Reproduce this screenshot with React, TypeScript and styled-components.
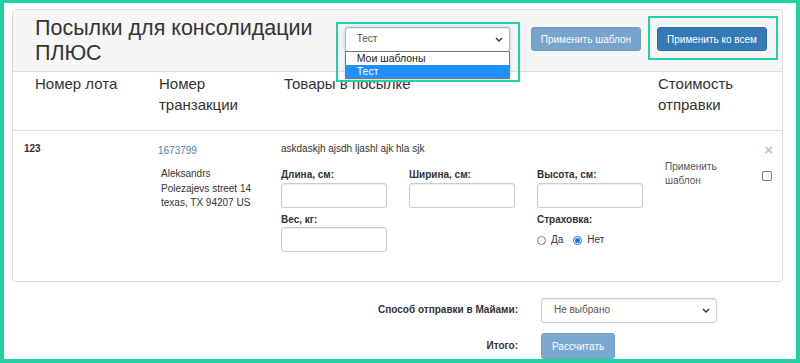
import React from "react";
import styled, { createGlobalStyle } from "styled-components";

const teal = "#1fd1a3";

const GlobalStyle = createGlobalStyle`
  html, body {
    margin: 0;
    padding: 0;
    background: #fff;
  }
  body {
    font-family: "Liberation Sans", Arial, sans-serif;
    font-size: 10px;
    line-height: 1.44;
    color: #333;
  }
  * {
    box-sizing: border-box;
  }
`;

const Chevron = () => (
  <svg width="8" height="5" viewBox="0 0 8 5">
    <polyline points="1,1 4,4 7,1" fill="none" stroke="#333" strokeWidth="1.4" />
  </svg>
);

const Root = () => {
  return (
    <Frame>
      <Panel>
        <PanelHeader>
          <Title>Посылки для консолидации ПЛЮС</Title>
          <Highlight $t={-5} $r={-10} $b={-30} $l={-9}>
            <SelectBox $focus $w={165}>
              <span>Тест</span>
              <Chevron />
            </SelectBox>
            <OptionList>
              <Option>Мои шаблоны</Option>
              <Option $active>Тест</Option>
            </OptionList>
          </Highlight>
          <Button $faded $ml={21}>
            Применить шаблон
          </Button>
          <Highlight $t={-11} $r={-11} $b={-9} $l={-9} $ml={16}>
            <Button>Применить ко всем</Button>
          </Highlight>
        </PanelHeader>

        <HeadRow>
          <div>Номер лота</div>
          <div>
            Номер
            <br />
            транзакции
          </div>
          <div>Товары в посылке</div>
          <div>Стоимость отправки</div>
        </HeadRow>

        <ItemRow>
          <LotNo>123</LotNo>
          <div>
            <TxLink href="#">1673799</TxLink>
            <Address>
              Aleksandrs
              <br />
              Polezajevs street 14
              <br />
              texas, TX 94207 US
            </Address>
          </div>
          <div>
            <div>askdaskjh ajsdh ljashl ajk hla sjk</div>
            <Fields>
              <Field>
                <Label>Длина, см:</Label>
                <Input />
              </Field>
              <Field>
                <Label>Ширина, см:</Label>
                <Input />
              </Field>
              <Field>
                <Label>Высота, см:</Label>
                <Input />
              </Field>
              <Field>
                <Label>Вес, кг:</Label>
                <Input />
              </Field>
              <span />
              <Field>
                <Label>Страховка:</Label>
                <RadioRow>
                  <Radio />
                  <RadioText>Да</RadioText>
                  <Radio $checked />
                  <RadioText>Нет</RadioText>
                </RadioRow>
              </Field>
            </Fields>
          </div>
          <ApplyCell>
            <Close>×</Close>
            <ApplyRow>
              <ApplyText>Применить шаблон</ApplyText>
              <Checkbox />
            </ApplyRow>
          </ApplyCell>
        </ItemRow>
      </Panel>

      <Summary>
        <SummaryLabel>Способ отправки в Майами:</SummaryLabel>
        <SelectBox $w={176} $pl={12}>
          <span>Не выбрано</span>
          <Chevron />
        </SelectBox>
        <SummaryLabel>Итого:</SummaryLabel>
        <Button $faded $h={26} $px={10}>
          Рассчитать
        </Button>
      </Summary>
    </Frame>
  );
};

export default function App() {
  return (
    <>
      <GlobalStyle />
      <Root />
    </>
  );
}

const Frame = styled.div`
  width: 800px;
  height: 363px;
  border: 4px solid ${teal};
  border-top-width: 3px;
  overflow: hidden;
  padding: 6px 13px 0 8px;
`;

const Panel = styled.div`
  border: 1px solid #ddd;
  border-radius: 3px;
  height: 273px;
  overflow: hidden;
`;

const PanelHeader = styled.div`
  display: flex;
  align-items: flex-start;
  height: 62px;
  padding: 6px 15px 0 22px;
  background: #f5f5f5;
  border-bottom: 1px solid #ddd;
`;

const Title = styled.h2`
  margin: 0;
  width: 312px;
  font-size: 21.5px;
  line-height: 25px;
  font-weight: 400;
  color: #333;
`;

const Highlight = styled.div<{ $t: number; $r: number; $b: number; $l: number; $ml?: number }>`
  position: relative;
  margin-top: 11px;
  margin-left: ${(p) => p.$ml || 0}px;
  z-index: 2;

  &::after {
    content: "";
    position: absolute;
    top: ${(p) => p.$t}px;
    right: ${(p) => p.$r}px;
    bottom: ${(p) => p.$b}px;
    left: ${(p) => p.$l}px;
    border: 2px solid ${teal};
    pointer-events: none;
  }
`;

const SelectBox = styled.div<{ $focus?: boolean; $w: number; $pl?: number }>`
  display: flex;
  align-items: center;
  justify-content: space-between;
  width: ${(p) => p.$w}px;
  height: 25px;
  padding: 0 6px 0 ${(p) => p.$pl || 11}px;
  background: #fff;
  border: 1px solid ${(p) => (p.$focus ? "#8dbde8" : "#ccc")};
  border-radius: 3px;
  color: #555;
  font-size: 10px;
  box-shadow: ${(p) =>
    p.$focus
      ? "inset 0 1px 1px rgba(0,0,0,.075), 0 0 4px rgba(102,175,233,.5)"
      : "inset 0 1px 1px rgba(0,0,0,.075)"};
`;

const OptionList = styled.div`
  position: absolute;
  top: 24px;
  left: 0;
  width: 165px;
  background: #fff;
  border: 1px solid #7a7a7a;
  box-shadow: 0 2px 3px rgba(0, 0, 0, 0.15);
`;

const Option = styled.div<{ $active?: boolean }>`
  height: 13px;
  line-height: 13px;
  padding-left: 11px;
  font-size: 10.5px;
  color: ${(p) => (p.$active ? "#fff" : "#222")};
  background: ${(p) => (p.$active ? "#1e90ff" : "#fff")};
`;

const Button = styled.button<{ $faded?: boolean; $ml?: number; $h?: number; $px?: number }>`
  height: ${(p) => p.$h || 24}px;
  margin-top: ${(p) => (p.$ml !== undefined ? 11 : 0)}px;
  margin-left: ${(p) => p.$ml || 0}px;
  padding: 0 ${(p) => p.$px || 9}px;
  font-family: "Liberation Sans", Arial, sans-serif;
  font-size: 10px;
  color: #fff;
  background: #337ab7;
  border: 1px solid #2e6da4;
  border-radius: 3px;
  opacity: ${(p) => (p.$faded ? 0.65 : 1)};
  justify-self: start;
  white-space: nowrap;
`;

const HeadRow = styled.div`
  display: grid;
  grid-template-columns: 124px 125px 374px 1fr;
  padding: 1px 15px 15px 22px;
  border-bottom: 1px solid #ddd;
  font-size: 15px;
  line-height: 21px;
  color: #333;
`;

const ItemRow = styled.div`
  display: grid;
  grid-template-columns: 134px 123px 384px 1fr;
  padding: 11px 10px 0 11px;
`;

const LotNo = styled.div`
  font-weight: 700;
`;

const TxLink = styled.a`
  display: block;
  margin-top: 2px;
  color: #4a7fb0;
  text-decoration: none;
`;

const Address = styled.div`
  margin-top: 9px;
  padding-left: 3px;
`;

const Fields = styled.div`
  display: grid;
  grid-template-columns: repeat(3, 106px);
  column-gap: 22px;
  row-gap: 5px;
  margin-top: 12px;
`;

const Field = styled.div`
  display: flex;
  flex-direction: column;
`;

const Label = styled.label`
  font-weight: 700;
`;

const Input = styled.input`
  width: 106px;
  height: 25px;
  border: 1px solid #ccc;
  border-radius: 3px;
  box-shadow: inset 0 1px 1px rgba(0, 0, 0, 0.075);
`;

const RadioRow = styled.div`
  display: flex;
  align-items: center;
  margin-top: 6px;
  height: 14px;
`;

const Radio = styled.span<{ $checked?: boolean }>`
  position: relative;
  width: 9px;
  height: 9px;
  border-radius: 50%;
  border: 1px solid ${(p) => (p.$checked ? "#1a73e8" : "#767676")};
  background: #fff;

  &::after {
    content: "";
    display: ${(p) => (p.$checked ? "block" : "none")};
    position: absolute;
    top: 1px;
    left: 1px;
    width: 5px;
    height: 5px;
    border-radius: 50%;
    background: #1a73e8;
  }
`;

const RadioText = styled.span`
  margin: 0 10px 0 5px;
`;

const ApplyCell = styled.div`
  display: flex;
  flex-direction: column;
`;

const Close = styled.span`
  align-self: flex-end;
  font-size: 15px;
  line-height: 15px;
  font-weight: 700;
  color: #c8c8c8;
  margin-right: -1px;
`;

const ApplyRow = styled.div`
  display: flex;
  justify-content: space-between;
  align-items: flex-start;
  margin-top: 3px;
`;

const ApplyText = styled.div`
  width: 70px;
  color: #555;
`;

const Checkbox = styled.span`
  width: 10px;
  height: 10px;
  margin-top: 11px;
  border: 1px solid #767676;
  border-radius: 2px;
  background: #fff;
`;

const Summary = styled.div`
  display: grid;
  grid-template-columns: 506px 176px;
  column-gap: 23px;
  row-gap: 10px;
  align-items: center;
  margin-top: 16px;
`;

const SummaryLabel = styled.div`
  text-align: right;
  font-weight: 700;
`;
